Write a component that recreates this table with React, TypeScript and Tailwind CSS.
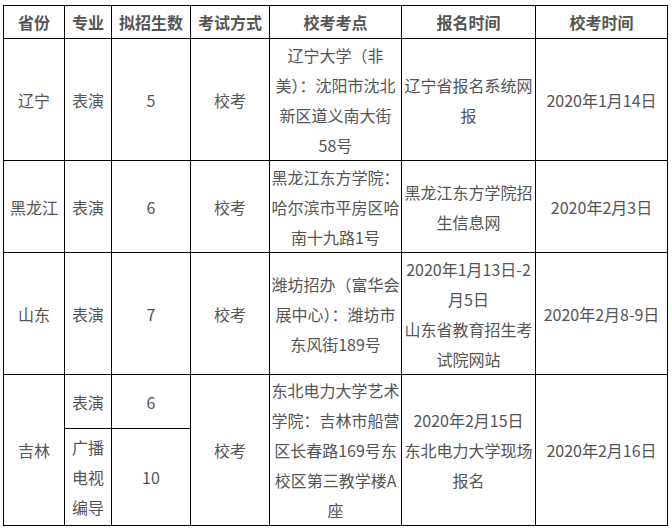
const cell = "border border-black text-center align-middle p-0";

const rows = [
  {
    province: "辽宁",
    major: "表演",
    count: "5",
    site: ["辽宁大学（非", "美）：沈阳市沈北", "新区道义南大街", "58号"],
    signup: ["辽宁省报名系统网", "报"],
    date: "2020年1月14日",
    h: "h-[122px]",
  },
  {
    province: "黑龙江",
    major: "表演",
    count: "6",
    site: ["黑龙江东方学院：", "哈尔滨市平房区哈", "南十九路1号"],
    signup: ["黑龙江东方学院招", "生信息网"],
    date: "2020年2月3日",
    h: "h-[92px]",
  },
  {
    province: "山东",
    major: "表演",
    count: "7",
    site: ["潍坊招办（富华会", "展中心）：潍坊市", "东风街189号"],
    signup: ["2020年1月13日-2", "月5日", "山东省教育招生考", "试院网站"],
    date: "2020年2月8-9日",
    h: "h-[122px]",
  },
];

const Lines = ({ lines }: { lines: string[] }) => (
  <>
    {lines.map((l, i) => (
      <div key={i} className="whitespace-nowrap">
        {l}
      </div>
    ))}
  </>
);

export default function App() {
  return (
    <div
      className="bg-white w-[672px] h-[528px] pl-[3px] pt-[5px] text-[16px] leading-[30px] text-[#555]"
      style={{ fontFamily: '"Noto Sans CJK SC", "Noto Sans", sans-serif' }}
    >
      <table className="table-fixed border-collapse w-[664px]">
        <colgroup>
          <col className="w-[61px]" />
          <col className="w-[47px]" />
          <col className="w-[79px]" />
          <col className="w-[79px]" />
          <col className="w-[132px]" />
          <col className="w-[134px]" />
          <col className="w-[132px]" />
        </colgroup>
        <thead>
          <tr className="font-bold">
            <th className={`${cell} h-[33px] font-bold`}>省份</th>
            <th className={`${cell} font-bold`}>专业</th>
            <th className={`${cell} font-bold`}>拟招生数</th>
            <th className={`${cell} font-bold`}>考试方式</th>
            <th className={`${cell} font-bold`}>校考考点</th>
            <th className={`${cell} font-bold`}>报名时间</th>
            <th className={`${cell} font-bold`}>校考时间</th>
          </tr>
        </thead>
        <tbody>
          {rows.map((r) => (
            <tr key={r.province}>
              <td className={`${cell} ${r.h}`}>{r.province}</td>
              <td className={cell}>{r.major}</td>
              <td className={cell}>{r.count}</td>
              <td className={cell}>校考</td>
              <td className={cell}>
                <Lines lines={r.site} />
              </td>
              <td className={cell}>
                <Lines lines={r.signup} />
              </td>
              <td className={cell}>{r.date}</td>
            </tr>
          ))}
          <tr>
            <td className={cell} rowSpan={2}>
              吉林
            </td>
            <td className={`${cell} h-[54px]`}>表演</td>
            <td className={cell}>6</td>
            <td className={cell} rowSpan={2}>
              校考
            </td>
            <td className={cell} rowSpan={2}>
              <Lines lines={["东北电力大学艺术", "学院：吉林市船营", "区长春路169号东", "校区第三教学楼A", "座"]} />
            </td>
            <td className={cell} rowSpan={2}>
              <Lines lines={["2020年2月15日", "东北电力大学现场", "报名"]} />
            </td>
            <td className={cell} rowSpan={2}>
              2020年2月16日
            </td>
          </tr>
          <tr>
            <td className={`${cell} h-[97px]`}>
              <Lines lines={["广播", "电视", "编导"]} />
            </td>
            <td className={cell}>10</td>
          </tr>
        </tbody>
      </table>
    </div>
  );
}
